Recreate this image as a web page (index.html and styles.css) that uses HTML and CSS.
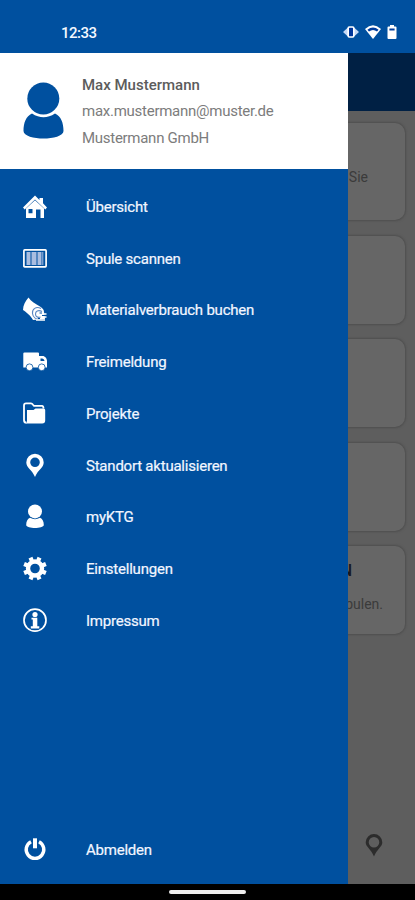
FILE: index.html
```html
<!DOCTYPE html>
<html lang="de">
<head>
<meta charset="utf-8">
<title>Menü</title>
<link rel="stylesheet" href="styles.css">
</head>
<body>
<div class="screen">
  <header class="status">
    <span class="clock">12:33</span>
    <div class="signals">
      <svg width="16" height="14" viewBox="0 0 16 14"><path d="M6 1.600v10.800L0 7zM10 1.600v10.800L16 7z" fill="#c3d7f5"/><rect x="5.200" y="2" width="5.600" height="10" rx="1.200" fill="#00369a" stroke="#fff" stroke-width="1.600"/></svg>
      <svg width="16" height="14" viewBox="0 0 16 14"><path d="M0 4Q8-3.400 16 4L8 14z" fill="#fff"/><path d="M2.400 4.700Q8 .2 13.600 4.700L12 6.500Q8 3.400 4 6.500z" fill="#003c9c"/></svg>
      <svg width="10" height="14" viewBox="0 0 10 14"><path d="M3 0h4v1.500h1.500q1 0 1 1V13q0 1-1 1h-7q-1 0-1-1V2.500q0-1 1-1H3z" fill="#fff"/><path d="M2.400 3.500h5.200v2H2.400z" fill="#003c9c"/></svg>
    </div>
  </header>

  <div class="stage">
    <main class="page">
      <div class="appbar"></div>
      <div class="cards">
        <section class="card tall"><p>Sie</p></section>
        <section class="card"></section>
        <section class="card"></section>
        <section class="card"></section>
        <section class="card last"><h2>N</h2><p>Spulen.</p></section>
      </div>
      <svg class="pagepin" width="18" height="23" viewBox="0 0 18 23"><path fill-rule="evenodd" d="M9 0a8.300 8.300 0 0 1 8.300 8.300C17.300 13 12 15 9 22.500 6 15 .7 13 .7 8.300A8.300 8.300 0 0 1 9 0zm0 3a5.300 5.300 0 1 0 0 10.600A5.300 5.300 0 0 0 9 3z" fill="#2c2c2c"/></svg>
    </main>

    <aside class="drawer">
      <div class="profile">
        <svg width="42" height="58" viewBox="0 0 42 58" fill="#00509f"><circle cx="20.300" cy="16.500" r="16"/><path d="M9 31.500Q20.500 39 32 31.500C38 34 40.500 41 40.500 49 40.500 54 30 56.500 20.500 56.500S.5 54 .5 49C.5 41 3 34 9 31.500z"/></svg>
        <div class="person">
          <strong>Max Mustermann</strong>
          <span class="mail">max.mustermann@muster.de</span>
          <span class="firm">Mustermann GmbH</span>
        </div>
      </div>
      <nav class="menu">
        <a class="item"><svg viewBox="0 0 24 24"><path d="M12 .5l4.500 4.400V3h3.500v5.300L24 12.500 22.300 14.500 12 4.600 1.700 14.500 0 12.500z"/><path fill-rule="evenodd" d="M12 5.300l9 8.300V23H17.500V14.500H13V23H3v-9.400zM5.500 14v4.200H9.500V14z"/></svg><span>Übersicht</span></a>
        <a class="item"><svg viewBox="0 0 24 24"><rect x=".9" y="2.900" width="22.200" height="17" rx=".8" fill="none" stroke="#fff" stroke-width="1.700"/><path d="M3.500 5h4v13h-4zM8.500 5h5v13h-5zM14.500 5h4v13h-4zM19.300 5h1v13h-1z" fill="#a9bde0"/></svg><span>Spule scannen</span></a>
        <a class="item"><svg viewBox="0 0 24 24"><path d="M5.500-.5C8 3.500 12.500 6 17 8.500c2.500 1.500 4 3 4 5.500l1 7-12 1C8 18 3 14 0 12 0 7 2.500 3 5.500-.5z"/><g fill="none" stroke="#5a86c2" stroke-width="1.100"><path d="M18 10.500c-5-2.500-9 .5-8.500 5s4 6 7 5.500"/><path d="M19 13.500c-4-2-6.500 0-6.500 2.500s2 4 5 3"/></g><g fill="none" stroke="#fff" stroke-width="1.400"><path d="M17 16h6.500M13 22h9M18 19h5.500"/></g><path d="M16.500 15h2.500M19 17.500h3M15 20.500h2" stroke="#0050a0" stroke-width="1"/></svg><span>Materialverbrauch buchen</span></a>
        <a class="item"><svg viewBox="0 0 24 24"><path fill-rule="evenodd" d="M1.500 2.500H15q1 0 1 1V6h3.500c2.500 0 4.500 2.500 4.500 5v6.500H.3v-14q0-1 1.200-1zM17.500 8.500V11h4c-.2-1.500-1.200-2.500-2.500-2.500z"/><g stroke="#0050a0" stroke-width=".8"><circle cx="6.500" cy="17.300" r="3.400"/><circle cx="18.700" cy="17.300" r="3.400"/></g></svg><span>Freimeldung</span></a>
        <a class="item"><svg viewBox="0 0 24 24"><path d="M3.500 20.700C1.500 20.700 1 20 1 18V3.500Q1 1.300 3 1.300h5q1 0 2 1.500l1 1h8Q20.500 3.800 20.500 6.500" fill="none" stroke="#fff" stroke-width="1.800"/><path d="M4 8h6.500l2-1.500h8q1.700 0 1.700 1.500v10.500q0 3-3 3H2.500q1.500-.5 1.500-2.500z"/></svg><span>Projekte</span></a>
        <a class="item"><svg viewBox="0 0 24 24"><path fill-rule="evenodd" d="M12-.3a8.700 8.700 0 0 1 8.700 8.700C20.700 13.500 15 15.500 12 23 9 15.500 3.300 13.500 3.300 8.400A8.700 8.700 0 0 1 12-.3zm0 3.800a4.800 4.800 0 1 0 0 9.600 4.800 4.800 0 0 0 0-9.600z"/></svg><span>Standort aktualisieren</span></a>
        <a class="item"><svg viewBox="0 0 24 24"><circle cx="12" cy="6.400" r="7"/><path d="M7 12.800q5 2.700 10 0c2.500 1 3.800 4 3.800 7.200 0 2-4.800 3-8.800 3s-8.800-1-8.800-3c0-3.200 1.300-6.200 3.800-7.200z"/></svg><span>myKTG</span></a>
        <a class="item"><svg viewBox="0 0 24 24"><circle cx="12" cy="11.500" r="7" fill="none" stroke="#fff" stroke-width="4.400"/><g transform="rotate(22.500 12 11.500)" stroke="#fff" stroke-width="4.200"><path id="teeth" d="M12-.3v4M12 19.300v4"/><use href="#teeth" transform="rotate(45 12 11.500)"/><use href="#teeth" transform="rotate(90 12 11.500)"/><use href="#teeth" transform="rotate(135 12 11.500)"/></g></svg><span>Einstellungen</span></a>
        <a class="item"><svg viewBox="0 0 24 24"><circle cx="12" cy="11.200" r="11" fill="none" stroke="#fff" stroke-width="1.700"/><circle cx="12" cy="5.500" r="2.600"/><path d="M8.500 8.800H14.300v8.400h2v2.300H7.800v-2.300h2v-6.600H8.500z"/></svg><span>Impressum</span></a>
        <a class="item logout"><svg viewBox="0 0 24 24"><path d="M8 3.700a8.800 8.800 0 1 0 8 0" fill="none" stroke="#fff" stroke-width="3.400"/><path d="M10 .3h4v10h-4z"/></svg><span>Abmelden</span></a>
      </nav>
    </aside>
  </div>

  <footer class="gesture"><i></i></footer>
</div>
</body>
</html>
```
FILE: styles.css
```css
* { box-sizing: border-box; }
body { margin: 0; font-family: Roboto, "Liberation Sans", sans-serif; }
.screen { width: 415px; height: 900px; display: flex; flex-direction: column; overflow: hidden; background: #000; }

.status { height: 53px; background: #00509f; color: #f4f8ff; display: flex; justify-content: space-between; align-items: flex-end; padding: 0 18px 12px 61px; }
.clock { font-size: 15px; line-height: 16px; font-weight: 500; letter-spacing: -.5px; }
.signals { display: flex; gap: 6px; height: 16px; }

.stage { position: relative; height: 831px; }
.page { height: 100%; background: #5e5e5e; display: flex; flex-direction: column; align-items: flex-end; }
.appbar { width: 100%; height: 58px; background: #002044; flex: none; }
.cards { width: 100%; flex: 1; padding: 12px 10px 0; display: flex; flex-direction: column; gap: 15.500px; }
.card { height: 88px; background: #666; border-radius: 10px; box-shadow: 0 0 2px 1px #4f4f4f; text-align: right; }
.card.tall { height: 97px; padding: 45px 37px 0 0; }
.card.last { padding: 16px 22px 0 0; }
.card p { margin: 0; font-size: 14px; line-height: 18px; color: #3b3b3b; }
.card h2 { margin: 0 31px 15px 0; font-size: 16px; line-height: 18px; font-weight: 500; color: #17181f; }
.pagepin { margin: 0 32px 27px 0; }

.drawer { position: absolute; inset: 0 auto 0 0; width: 347.500px; background: #00509f; display: flex; flex-direction: column; }
.profile { height: 115.500px; background: #fff; display: flex; padding: 29px 0 0 23px; gap: 17px; }
.person { display: flex; flex-direction: column; align-items: flex-start; margin-top: -10px; font-size: 15px; line-height: 26.300px; color: #7c7c7c; white-space: nowrap; }
.person strong { font-weight: 500; color: #5c5c5c; }
.mail { letter-spacing: -.26px; }
.firm { letter-spacing: -.28px; }

.menu { flex: 1; display: flex; flex-direction: column; padding: 12.500px 0 8px; }
.item { height: 51.750px; display: flex; align-items: center; gap: 39.500px; padding-left: 22.500px; color: #f2f6ff; font-size: 15px; letter-spacing: -.22px; white-space: nowrap; -webkit-text-stroke: .2px #f2f6ff; }
.item svg { width: 24px; height: 24px; fill: #fff; flex: none; overflow: visible; }
.logout { margin-top: auto; }

.gesture { height: 16px; display: flex; justify-content: center; align-items: center; }
.gesture i { width: 77px; height: 4px; border-radius: 2px; background: #eee; }
```
